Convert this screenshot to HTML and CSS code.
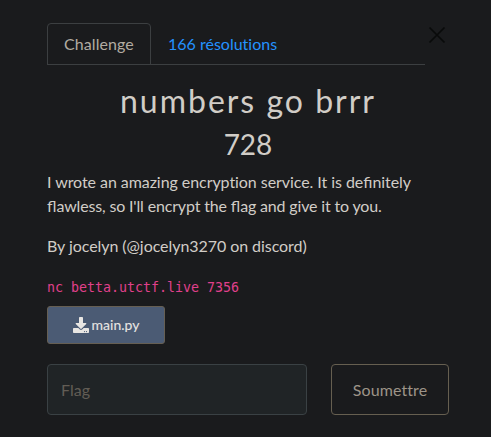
FILE: index.html
```html
<!DOCTYPE html>
<html lang="fr">
<head>
<meta charset="utf-8">
<title>Challenge</title>
<link rel="stylesheet" href="styles.css">
</head>
<body>
<main class="modal">
  <header class="top">
    <nav class="tabs">
      <a class="tab active">Challenge</a>
      <a class="tab">166 résolutions</a>
    </nav>
    <svg class="close" viewBox="0 0 24 24"><path d="M4.500 4.500l15 15M19.500 4.500l-15 15"/></svg>
  </header>
  <h2 class="name">numbers go brrr</h2>
  <h3 class="value">728</h3>
  <div class="desc">
    <p><span class="snug">I wrote an amazing encryption service. It is de<span class="lig">fi</span>nitely</span><br><span class="tight"><span class="lig">fl</span>awless, so I'll encrypt the <span class="lig">fl</span>ag and give it to you.</span></p>
    <p><span class="snug">By jocelyn (@jocelyn3270 on discord)</span></p>
    <p class="command"><code>nc betta.utctf.live 7356</code></p>
  </div>
  <a class="file"><svg class="icon" viewBox="0 0 512 512"><path d="M216 0h80c13.300 0 24 10.700 24 24v168h87.700c17.800 0 26.700 21.500 14.100 34.100L269.700 378.300c-7.500 7.500-19.800 7.500-27.300 0L90.100 226.100c-12.600-12.600-3.700-34.100 14.100-34.100H192V24c0-13.300 10.700-24 24-24zm296 376v112c0 13.300-10.700 24-24 24H24c-13.300 0-24-10.700-24-24V376c0-13.300 10.700-24 24-24h146.700l49 49c20.100 20.100 52.500 20.100 72.600 0l49-49H488c13.300 0 24 10.700 24 24zm-124 88c0-11-9-20-20-20s-20 9-20 20 9 20 20 20 20-9 20-20zm64 0c0-11-9-20-20-20s-20 9-20 20 9 20 20 20 20-9 20-20z"/></svg><span>main.py</span></a>
  <form class="submit">
    <input class="flag" type="text" placeholder="Flag">
    <button class="send" type="button">Soumettre</button>
  </form>
</main>
</body>
</html>
```
FILE: styles.css
```css
* { box-sizing: border-box; }
body {
  margin: 0;
  background: #1a1b1d;
  color: #d1cdc7;
  font: 16px/24px Lato, sans-serif;
  font-variant-ligatures: none;
  overflow: hidden;
}
.modal { width: 402px; margin: 23px 0 0 47px; }
.top { display: flex; }
.tabs { display: flex; width: 378px; height: 42px; border-bottom: 1px solid #3c3f41; }
.tab {
  height: 42px;
  padding: 9px 17px;
  color: #2492ff;
  white-space: nowrap;
}
.tab.active {
  width: 104px;
  padding: 8px 16px;
  color: #b2aca2;
  border: 1px solid #3c3f41;
  border-radius: 4px 4px 0 0;
  letter-spacing: 0.08px;
}
.close { width: 24px; height: 24px; fill: none; stroke: #090a0a; stroke-width: 1.7; }
h2, h3 { margin: 0; font-weight: 400; text-align: center; }
.name { margin-top: 17px; font-size: 32px; line-height: 38px; letter-spacing: 2px; }
.value { margin-top: 7px; font-size: 28px; line-height: 34px; }
.desc { margin-top: 9px; white-space: nowrap; }
.desc p { margin: 0 0 16px; }
.desc .command { margin-bottom: 6px; }
.snug { letter-spacing: -0.06px; }
.tight { letter-spacing: -0.16px; }
.lig { letter-spacing: 0; font-variant-ligatures: normal; }
code { font: 13.3px/24px "DejaVu Sans Mono", monospace; color: #e0408c; }
.file {
  display: flex;
  align-items: center;
  justify-content: center;
  gap: 3px;
  width: 118px;
  height: 38px;
  border: 1px solid #665f53;
  border-radius: 3px;
  background: #4b5b74;
  color: #e8e6e3;
  font-size: 14px;
  -webkit-text-stroke: 0.1px;
}
.icon { width: 16px; height: 16px; fill: currentColor; }
.submit { display: flex; gap: 24px; margin-top: 20px; }
.flag, .send { height: 51px; border-radius: 4px; font: 16px/24px Lato, sans-serif; }
.flag {
  width: 260px;
  padding: 0 13px;
  background: #202426;
  border: 1px solid #3a4144;
  color: #d1cdc7;
}
.flag::placeholder { color: #625d55; opacity: 1; }
.send {
  width: 118px;
  padding: 0;
  background: none;
  border: 1px solid #665f50;
  color: #9d9488;
  font-variant-ligatures: none;
  letter-spacing: 0.1px;
}
```
